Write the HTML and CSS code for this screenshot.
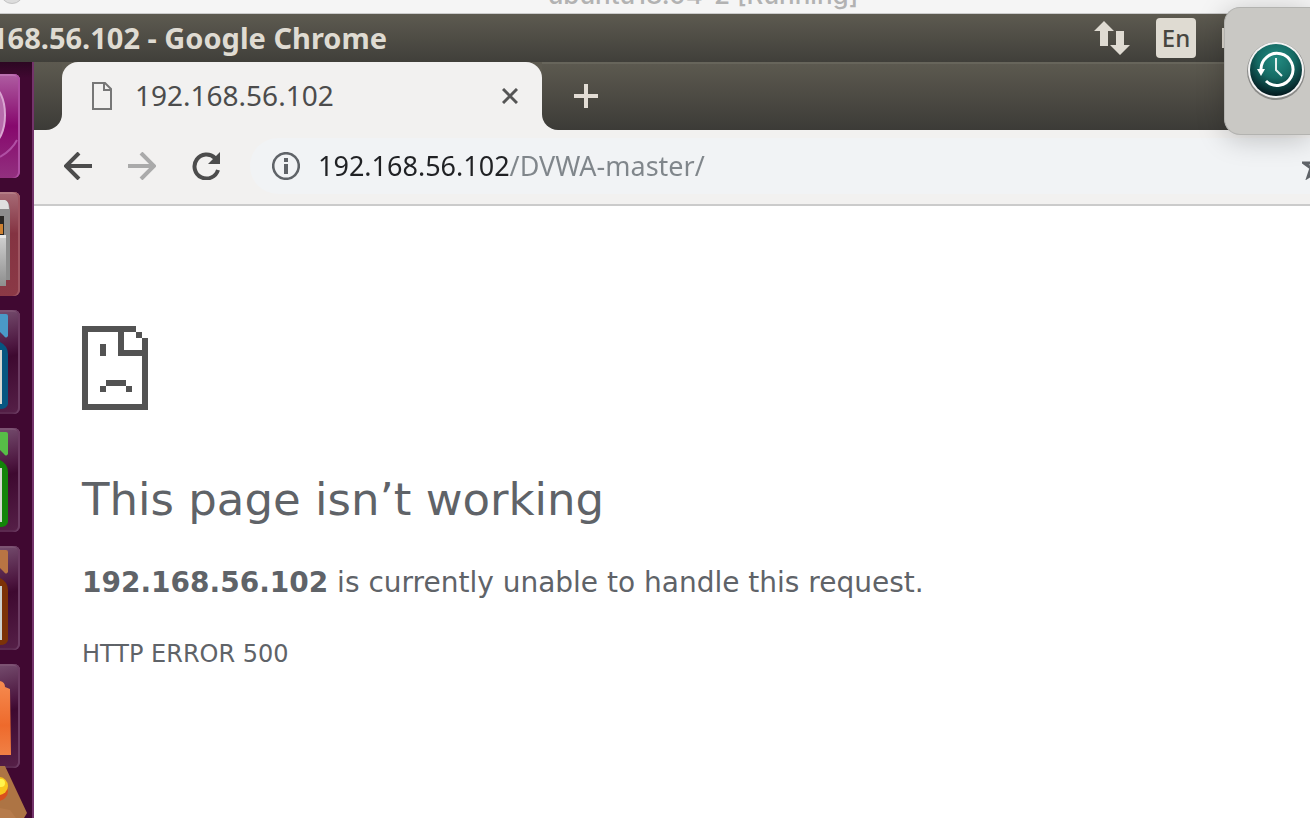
FILE: index.html
```html
<!DOCTYPE html>
<html lang="en">
<head>
<meta charset="utf-8">
<title>192.168.56.102</title>
<link rel="stylesheet" href="styles.css">
</head>
<body>
<header class="vm-title"><span class="vm-dot"></span><span class="vm-name">ubuntu18.04-2 [Running]</span></header>
<div class="panel">
  <div class="panel-title"><span>192.168.56.102 - Google Chrome</span></div>
  <div class="tray">
    <svg class="net" width="36" height="36" viewBox="0 0 36 36"><path d="M10 1L20 11H14V26H6V11H0ZM22 11H30V25H36L26 35L16 25H22Z"/></svg>
    <button class="lang">En</button>
    <span class="tray-item"></span>
  </div>
</div>
<div class="desktop">
  <nav class="launcher" aria-label="Launcher">
    <button class="tile tile-dash" aria-label="Search"><svg width="20" height="104" viewBox="0 0 20 104"><ellipse cx="-8" cy="41" rx="13" ry="28" fill="#b76cab" stroke="#d9a5d1" stroke-width="2"/><path d="M0 83Q12 76 17 66" fill="none" stroke="#b04fa4" stroke-width="2"/></svg></button>
    <button class="tile tile-files" aria-label="Files"><svg width="20" height="104" viewBox="0 0 20 104"><defs><linearGradient id="steel" x2="0" y2="1"><stop offset="0" stop-color="#d0d0d0"/><stop offset="1" stop-color="#8e8e8e"/></linearGradient></defs><path d="M0 8H5Q9 9 10 18V88H0Z" fill="#8d8d8d"/><path d="M0 8H5Q9 9 9 17H0Z" fill="#e0e0e0"/><path d="M0 24H4V43H0Z" fill="#292725"/><path d="M0 32H3V42H0Z" fill="#ce8132"/><path d="M0 44H6V94H0Z" fill="url(#steel)"/><path d="M0 43H6V46H0Z" fill="#e8e8e8"/></svg></button>
    <button class="tile" aria-label="Writer"><svg width="20" height="104" viewBox="0 0 20 104"><path d="M0 4H6Q8 4 8 6V26Q6 29 4 26L0 22Z" fill="#4a99c7"/><path d="M0 32Q8 36 8 44V94Q7 99 0 99Z" fill="#075681"/><path d="M0 40H2V94H0Z" fill="#d8d8d2"/></svg></button>
    <button class="tile" aria-label="Calc"><svg width="20" height="104" viewBox="0 0 20 104"><path d="M0 4H6Q8 4 8 6V26Q6 29 4 26L0 22Z" fill="#57bd47"/><path d="M0 32Q8 36 8 44V94Q7 99 0 99Z" fill="#138409"/><path d="M0 40H2V94H0Z" fill="#d8d8d2"/></svg></button>
    <button class="tile" aria-label="Impress"><svg width="20" height="104" viewBox="0 0 20 104"><path d="M0 4H6Q8 4 8 6V26Q6 29 4 26L0 22Z" fill="#b87443"/><path d="M0 32Q8 36 8 44V94Q7 99 0 99Z" fill="#7c3207"/><path d="M0 40H2V94H0Z" fill="#ccd0ce"/></svg></button>
    <button class="tile" aria-label="Software"><svg width="20" height="104" viewBox="0 0 20 104"><defs><linearGradient id="bag" x2="0" y2="1"><stop offset="0" stop-color="#f58b50"/><stop offset=".6" stop-color="#ee6a2c"/><stop offset="1" stop-color="#f08045"/></linearGradient></defs><path d="M0 17Q5 18 5 23L10 25L11 91H0Z" fill="url(#bag)"/></svg></button>
    <button class="folded" aria-label="Settings"><svg width="30" height="56" viewBox="0 0 30 56"><path d="M0 2H5L27 49L24 54H0Z" fill="#ad7444"/><path d="M0 44L10 46L16 54H0Z" fill="#b67b4b"/><circle cx="-2" cy="27" r="10" fill="#d9501d"/><circle cx="-1" cy="22" r="9" fill="#f8c51c"/><circle cx="1" cy="19" r="4" fill="#fff34d"/></svg></button>
  </nav>
  <div class="browser">
    <div class="tabs">
      <span class="tabs-lead"></span>
      <div class="tab">
        <svg width="20" height="28" viewBox="0 0 20 28"><path d="M1 1H13L19 7V27H1ZM12 1V8H19" fill="none" stroke="#777" stroke-width="2"/></svg>
        <span class="tab-name">192.168.56.102</span>
        <button class="icon" aria-label="Close tab"><svg width="16" height="16" viewBox="0 0 16 16"><path d="M1 1L15 15M15 1L1 15" stroke="#555" stroke-width="3"/></svg></button>
      </div>
      <div class="tabs-rest"><button class="icon" aria-label="New tab"><svg width="24" height="24" viewBox="0 0 24 24"><path d="M12 0V24M0 12H24" stroke="#e3ddd5" stroke-width="4"/></svg></button></div>
    </div>
    <div class="toolbar">
      <button class="icon" aria-label="Back"><svg width="28" height="28" viewBox="0 0 28 28"><path d="M28 14H3M15 1L2 14L15 27" fill="none" stroke="#4c4c4c" stroke-width="4"/></svg></button>
      <button class="icon" aria-label="Forward" disabled><svg width="28" height="28" viewBox="0 0 28 28"><path d="M0 14H25M13 1L26 14L13 27" fill="none" stroke="#aaa" stroke-width="4"/></svg></button>
      <button class="icon" aria-label="Reload"><svg width="28" height="28" viewBox="0 0 28 28"><path d="M23 6A12 12 0 1 0 26 18" fill="none" stroke="#4c4c4c" stroke-width="4"/><path d="M28 0V12H16Z" fill="#4c4c4c"/></svg></button>
      <div class="omnibox">
        <button class="icon" aria-label="Site information"><svg width="28" height="28" viewBox="0 0 28 28"><circle cx="14" cy="14" r="12.8" fill="none" stroke="#5f6368" stroke-width="2.6"/><path d="M12 6H16V10H12ZM12 12H16V22H12Z" fill="#5f6368"/></svg></button>
        <input class="url" type="text" aria-label="Address" value="192.168.56.102/DVWA-master/" spellcheck="false">
        <button class="icon" aria-label="Bookmark"><svg width="28" height="28" viewBox="0 0 28 28"><path d="M14 3L17 11H26L19 16L22 25L14 20L6 25L9 16L2 11H11Z" fill="none" stroke="#5f6368" stroke-width="3"/></svg></button>
      </div>
    </div>
    <main class="page">
      <svg width="66" height="84" viewBox="0 0 66 84" fill="#535353" shape-rendering="crispEdges"><path d="M0 0H54V6H42V24H60V12H66V84H0ZM6 6V78H60V30H36V6Z" fill-rule="evenodd"/><path d="M54 6H60V12H54ZM18 18H24V30H18ZM24 54H44V60H24ZM18 60H24V66H18ZM44 60H50V66H44Z"/></svg>
      <h1>This page isn’t working</h1>
      <p class="message"><strong>192.168.56.102</strong> is currently unable to handle this request.</p>
      <p class="code">HTTP ERROR 500</p>
    </main>
  </div>
</div>
<aside class="notice" aria-label="Time Machine">
  <svg width="60" height="62" viewBox="0 0 60 62"><defs><radialGradient id="tm" cx=".5" cy=".3" r=".7"><stop offset="0" stop-color="#238c82"/><stop offset=".5" stop-color="#156a64"/><stop offset="1" stop-color="#03181e"/></radialGradient></defs><circle cx="30" cy="31" r="29" fill="#8b8b89"/><circle cx="30" cy="30" r="28" fill="#f3f3f3"/><circle cx="30" cy="30" r="26" fill="url(#tm)"/><path d="M15 30A16 16 0 1 1 20 41" fill="none" stroke="#fff" stroke-width="3"/><path d="M11 29H19L15 36Z" fill="#fff"/><path d="M30 18V30L36 36" fill="none" stroke="#e5f1ef" stroke-width="2"/></svg>
</aside>
</body>
</html>
```
FILE: styles.css
```css
* { box-sizing: border-box; }
body { margin: 0; height: 100vh; overflow: hidden; display: flex; flex-direction: column; background: #fff; font-family: "Noto Sans", sans-serif; }
button { border: 0; padding: 0; background: none; font: inherit; }
svg { display: block; flex: none; }
.icon { display: flex; flex: none; }

/* Host window title */
.vm-title { position: relative; flex: none; height: 14px; display: flex; justify-content: center; align-items: flex-end; overflow: hidden; background: #f5f5f5; border-bottom: 1px solid #cbcbcb; }
.vm-dot { position: absolute; left: 0; top: -20px; width: 24px; height: 24px; border-radius: 50%; background: #ddd; border: 1px solid #c4c4c4; }
.vm-name { padding: 0 0 2px 96px; color: #b2b2b2; font: 500 26px/32px "Inter", sans-serif; white-space: nowrap; }

/* Desktop panel */
.panel { flex: none; height: 48px; display: flex; justify-content: space-between; background: linear-gradient(#5d5a50, #403f3a); color: #dfdbd2; }
.panel-title { width: 387px; display: flex; justify-content: flex-end; overflow: hidden; white-space: nowrap; font: 700 29px/48px "Noto Sans", sans-serif; }
.tray { display: flex; align-items: center; padding-right: 72px; }
.net { fill: #dfdbd2; margin-right: 26px; }
.lang { width: 40px; height: 40px; border-radius: 4px; background: #dfdbd2; color: #474640; font-size: 24px; font-weight: 500; line-height: 40px; margin-right: 26px; }
.tray-item { width: 16px; height: 20px; background: #dfdbd2; }

/* Launcher */
.desktop { flex: 1; min-height: 0; display: flex; }
.launcher { flex: none; width: 34px; overflow: hidden; padding-top: 12px; display: flex; flex-direction: column; gap: 14px; background: linear-gradient(#2c0722, #400831 16px); border-right: 2px solid #73346a; }
.tile { flex: none; width: 20px; height: 104px; overflow: hidden; border-radius: 0 6px 6px 0; box-shadow: inset -2px 0 #6c3b62, inset 0 2px #7c5272, inset 0 -2px #5b294f; background: linear-gradient(165deg, #754d6e, #4d1740 35%, #3e0930 45%, #562048); }
.tile-dash { background: linear-gradient(#af5da2, #87086d 50%, #92307f); box-shadow: inset -2px 0 #ae4da2, inset 0 2px #bb70b0; }
.tile-files { background: linear-gradient(#a76b76, #843342 40%, #8b3946); box-shadow: inset -2px 0 #9e5561, inset 0 2px #b37c85; }
.folded { flex: none; margin-top: -18px; }

/* Browser window */
.browser { flex: 1; min-width: 0; display: flex; flex-direction: column; background: #f2f1f0; }
.tabs { flex: none; height: 68px; display: flex; background: linear-gradient(#5d5a50 0 20px, #f2f1f0 20px); }
.tabs-lead { width: 28px; background: linear-gradient(#5d5a50, #3c3b37); border-bottom-right-radius: 16px; }
.tab { width: 480px; display: flex; align-items: center; padding: 0 24px 0 30px; background: #f2f1f0; border-radius: 16px 16px 0 0; }
.tab-name { flex: 1; padding: 0 0 2px 23px; color: #4c4c4c; font-size: 28px; line-height: 40px; }
.tabs-rest { flex: 1; display: flex; align-items: center; padding-left: 32px; background: linear-gradient(#5d5a50, #3c3b37); border-bottom-left-radius: 16px; box-shadow: inset 0 2px #67655b; }
.toolbar { flex: none; height: 76px; display: flex; align-items: center; gap: 36px; padding: 0 0 2px 30px; border-bottom: 2px solid #cbcbcb; overflow: hidden; }
.omnibox { flex: 1; min-width: 0; height: 56px; margin: 0 -20px 0 -6px; display: flex; align-items: center; padding-left: 22px; border-radius: 28px 0 0 28px; background: #f1f3f5; }
.url { flex: 1; min-width: 0; height: 40px; margin-left: 18px; border: 0; padding: 0; outline: 0; font: 27px/40px "Noto Sans", sans-serif; color: transparent; background: linear-gradient(90deg, #202124 192px, #80868b 192px); -webkit-background-clip: text; background-clip: text; }

/* Error page */
.page { flex: 1; min-height: 0; padding: 120px 48px 0; background: #fff; color: #5f6368; font-family: "DejaVu Sans", sans-serif; }
h1 { margin: 60px 0 0; font-size: 45px; line-height: 60px; font-weight: 400; }
.message { margin: 37px 0 0; font-size: 28px; line-height: 32px; }
.code { margin: 39px 0 0; font-size: 24px; line-height: 32px; }

.notice { position: absolute; right: 0; top: 7px; width: 86px; height: 128px; padding: 32px 0 0 21px; border: 1px solid #b3b3b0; border-right: 0; border-radius: 16px 0 0 16px; background: #c9c8c4; box-shadow: 0 4px 28px rgba(0,0,0,.22); overflow: hidden; }
```
